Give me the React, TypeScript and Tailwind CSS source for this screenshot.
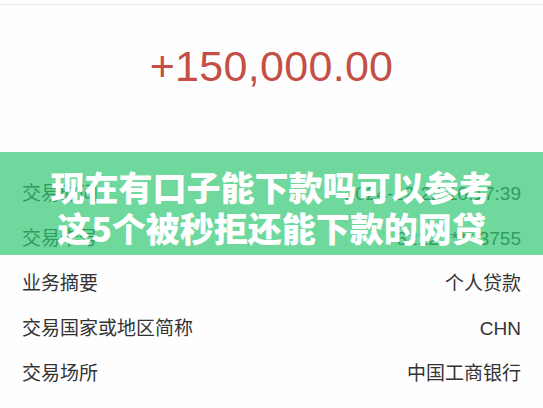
import React from "react";

const rows: [string, string][] = [
  ["交易时间", "2024-12-22 10:17:39"],
  ["交易卡号", "6212 **** 3755"],
  ["业务摘要", "个人贷款"],
  ["交易国家或地区简称", "CHN"],
  ["交易场所", "中国工商银行"],
  ["交易金额", "150,000.00"],
];

export default function App() {
  return (
    <div
      className="relative h-[408px] w-full overflow-hidden bg-[#fefefe]"
      style={{ fontFamily: '"Liberation Sans", "Noto Sans CJK SC", sans-serif' }}
    >
      <div className="h-[5px] border-b border-[#ececec]" />
      <div className="pt-[37px] pb-[82px] text-center">
        <div className="text-[43px] leading-[48px] tracking-[0.3px] text-[#c34f46]">
          +150,000.00
        </div>
      </div>
      <div className="flex flex-col">
        {rows.map(([k, v]) => (
          <div
            key={k}
            className="flex h-[45px] shrink-0 items-center justify-between px-[22px] text-[19px] text-[#333333]"
          >
            <span>{k}</span>
            <span>{v}</span>
          </div>
        ))}
      </div>
      <div className="absolute inset-x-0 top-[152px] flex h-[103px] flex-col items-center bg-[rgba(50,200,115,0.7)] pt-[14px] pb-[7px]">
        <div
          className="text-[34px] leading-[41px] font-black text-white"
          style={{ fontFamily: '"Noto Sans CJK SC", sans-serif' }}
        >
          现在有口子能下款吗可以参考
        </div>
        <div
          className="text-[34px] leading-[41px] font-black text-white"
          style={{ fontFamily: '"Noto Sans CJK SC", sans-serif' }}
        >
          这5个被秒拒还能下款的网贷
        </div>
      </div>
    </div>
  );
}
